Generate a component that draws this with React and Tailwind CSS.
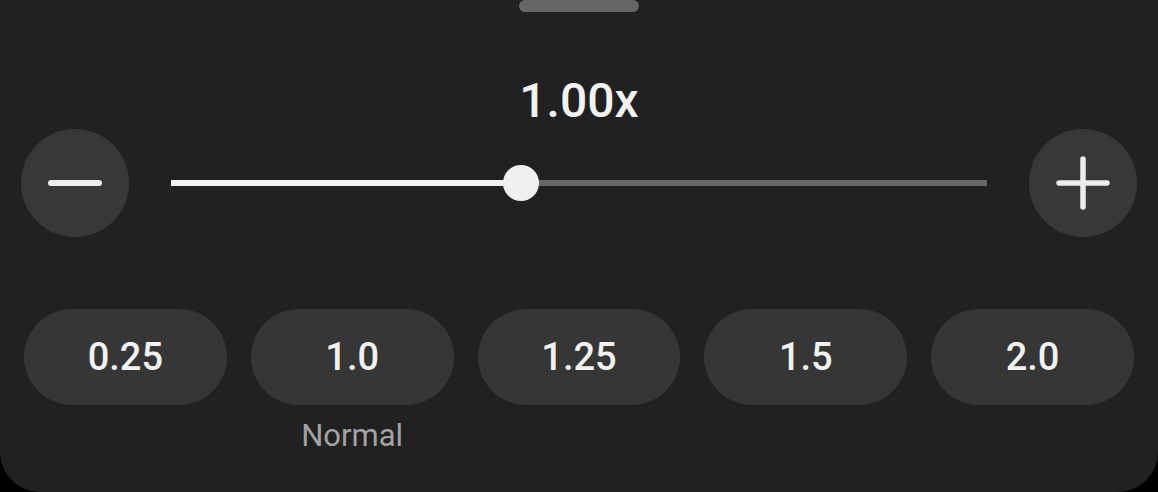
import React from 'react';

const SPEEDS = [
  { value: 0.25, label: '0.25' },
  { value: 1.0, label: '1.0', note: 'Normal' },
  { value: 1.25, label: '1.25' },
  { value: 1.5, label: '1.5' },
  { value: 2.0, label: '2.0' },
];

const MIN = 0.25;
const MAX = 2.0;

const RoundButton = ({ children }) => (
  <button className="w-[108px] h-[108px] shrink-0 rounded-full bg-[#383838] flex items-center justify-center">
    {children}
  </button>
);

const App = () => {
  const speed = 1.0;
  const pct = ((speed - MIN) / (MAX - MIN)) * 100;

  return (
    <div className="w-full h-[492px] bg-black" style={{ fontFamily: 'Roboto, "Noto Sans", sans-serif' }}>
      <div className="h-full bg-[#212121] rounded-b-[40px] flex flex-col">
        {/* drag handle */}
        <div className="mx-auto w-[120px] h-[12px] rounded-full bg-[#666666]" />

        {/* current speed */}
        <div className="mt-[65px] text-center text-[48px] leading-[48px] font-medium text-[#f2f2f2]">
          {speed.toFixed(2)}x
        </div>

        {/* slider row */}
        <div className="mt-[4px] px-[21px] flex items-center gap-[42px]">
          <RoundButton>
            <svg width="54" height="54" viewBox="0 0 54 54">
              <line x1="3" y1="27" x2="51" y2="27" stroke="#ececec" strokeWidth="6" strokeLinecap="round" />
            </svg>
          </RoundButton>

          <div className="relative flex-1 h-[6px] bg-[#676767]">
            <div className="absolute left-0 top-0 h-full bg-[#f2f2f2]" style={{ width: `${pct}%` }} />
            <div
              className="absolute top-1/2 w-[36px] h-[36px] -mt-[18px] -ml-[18px] rounded-full bg-[#f0f0f0]"
              style={{ left: `${pct}%` }}
            />
          </div>

          <RoundButton>
            <svg width="54" height="54" viewBox="0 0 54 54">
              <line x1="3" y1="27" x2="51" y2="27" stroke="#ececec" strokeWidth="5.5" strokeLinecap="round" />
              <line x1="27" y1="3" x2="27" y2="51" stroke="#ececec" strokeWidth="5.5" strokeLinecap="round" />
            </svg>
          </RoundButton>
        </div>

        {/* presets */}
        <div className="mt-[72px] px-[24px] grid grid-cols-5 gap-[24px]">
          {SPEEDS.map((s) => (
            <div key={s.label} className="flex flex-col items-center">
              <button className="w-full h-[96px] rounded-full bg-[#363636] flex items-center justify-center text-[38px] font-medium text-[#f2f2f2]">
                {s.label}
              </button>
              {s.note && (
                <div className="mt-[15px] text-[31px] leading-[31px] text-[#a3a3a3]">{s.note}</div>
              )}
            </div>
          ))}
        </div>
      </div>
    </div>
  );
};

export default App;
